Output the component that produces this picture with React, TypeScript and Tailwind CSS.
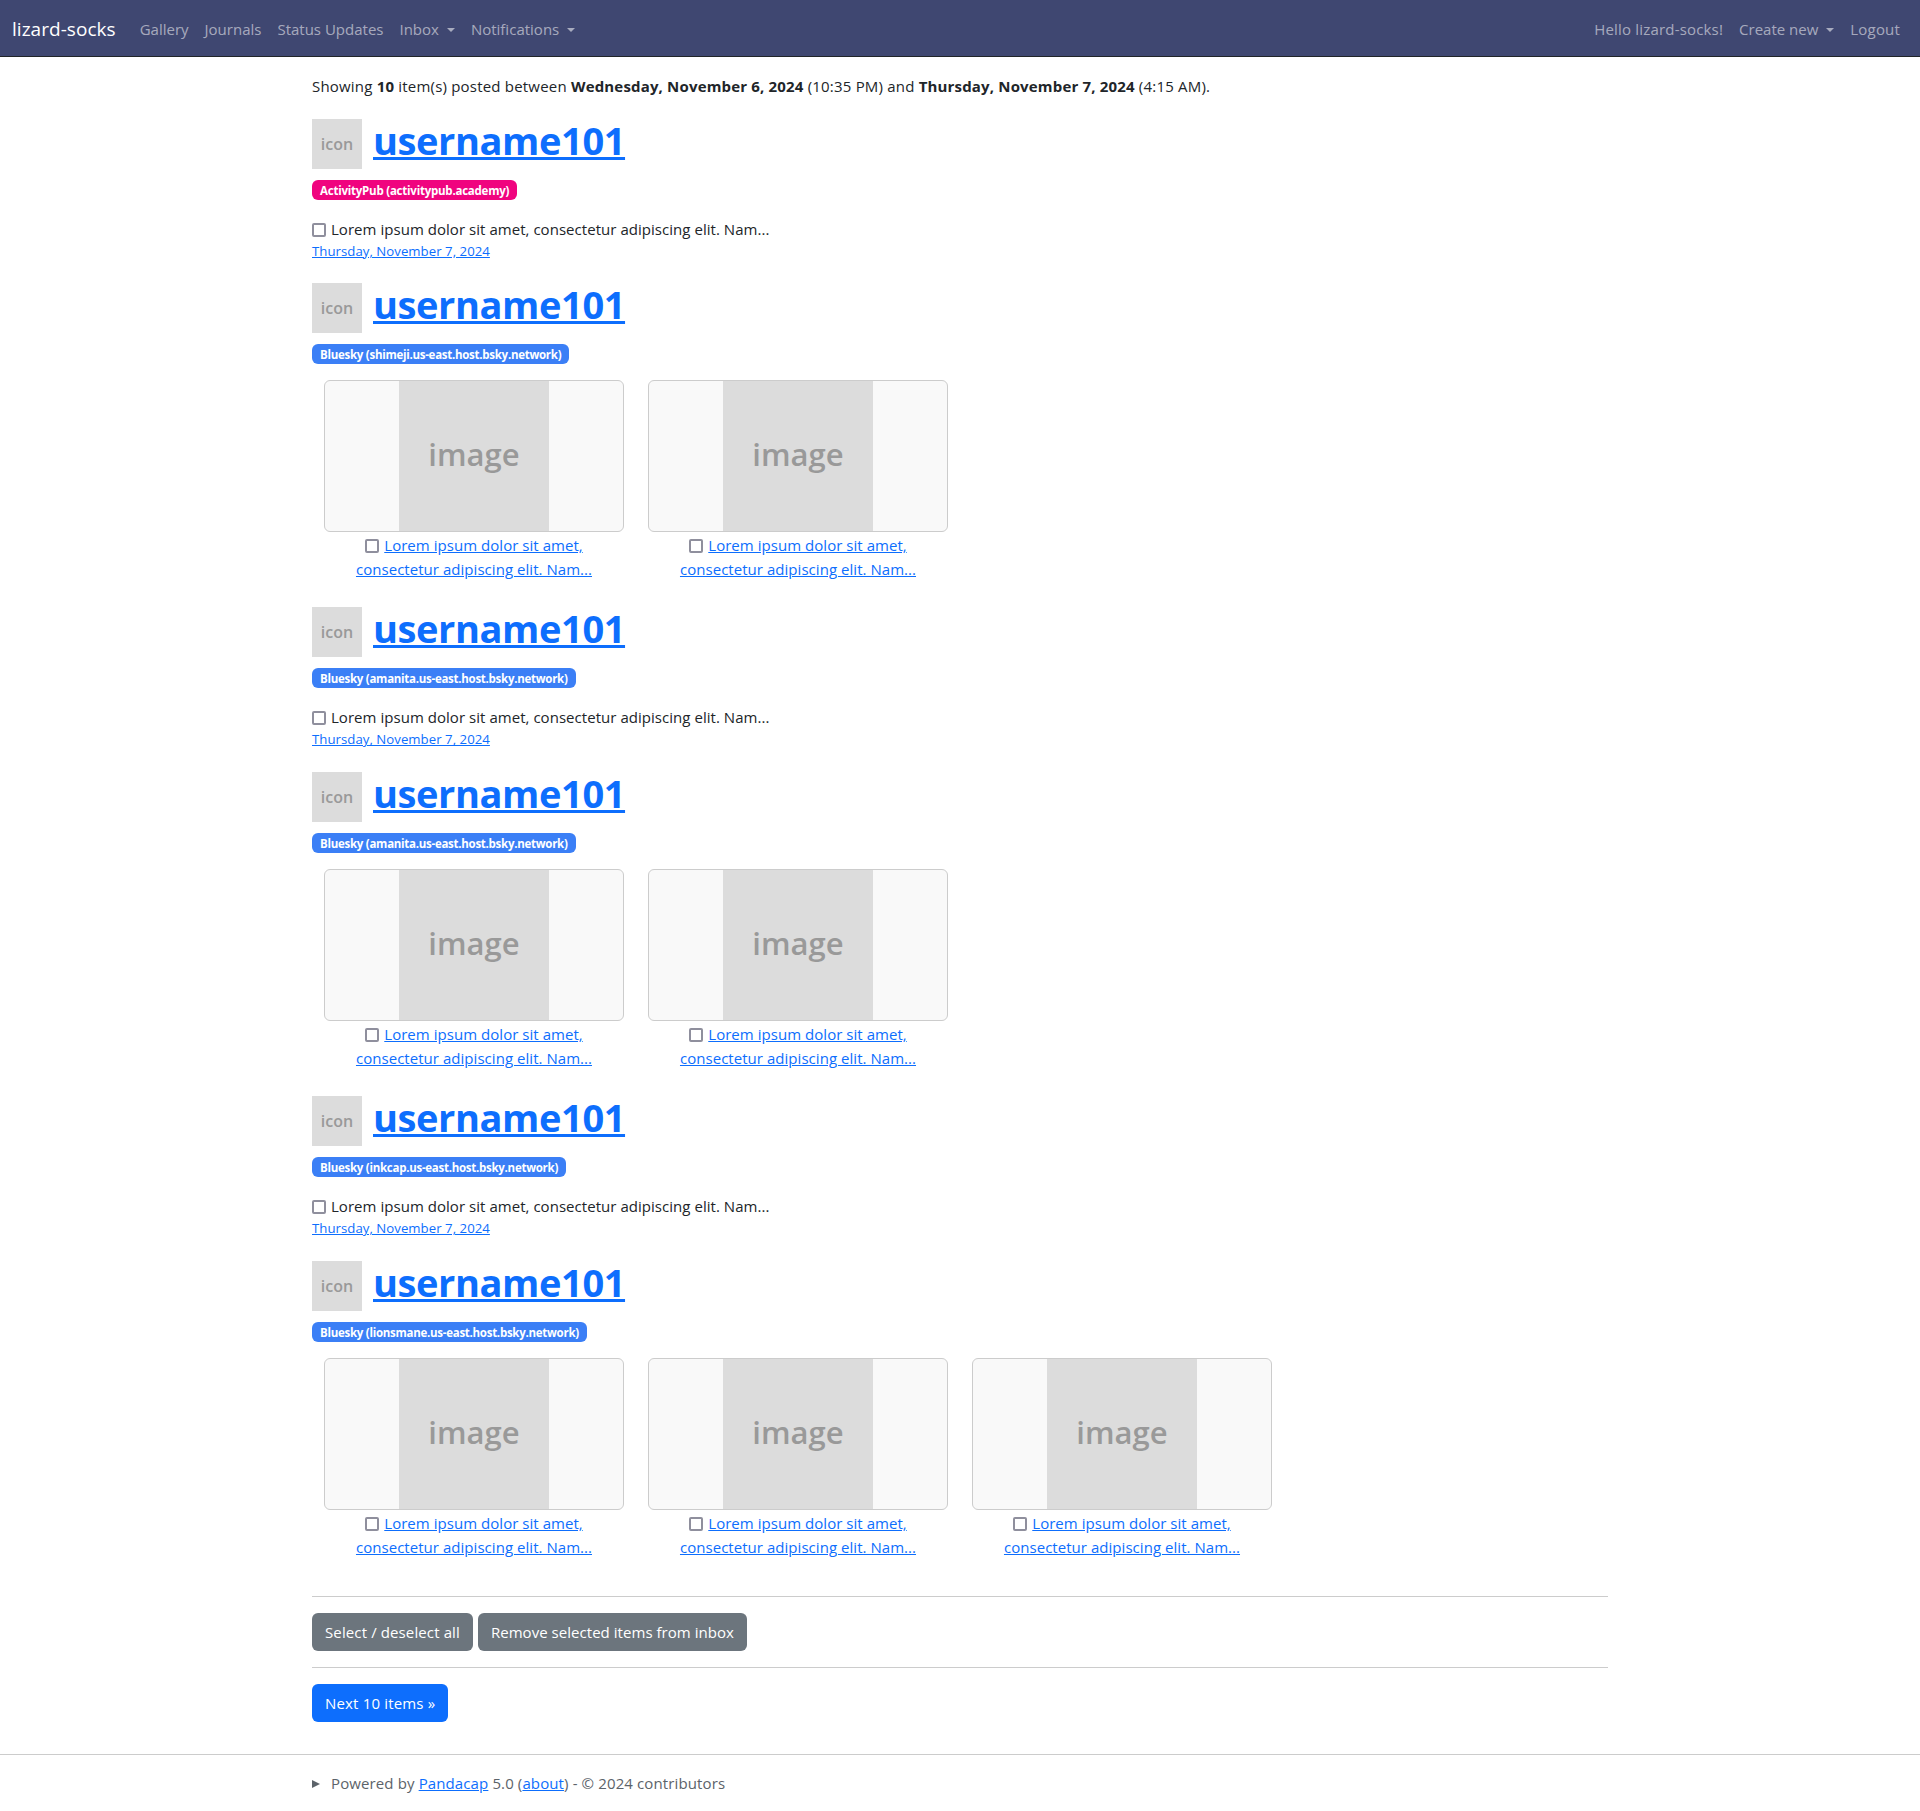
const font = { fontFamily: '"Open Sans", sans-serif' };

const Caret = () => (
    <span className="ml-2 inline-block align-[3px] border-x-[4.8px] border-t-[4.8px] border-x-transparent border-t-current" />
);

const NavLink = ({ label, caret, wide }: { label: string; caret?: boolean; wide?: boolean }) => (
    <a className={`px-2 text-[rgba(255,255,255,0.55)] whitespace-nowrap ${wide ? "tracking-[0.18px]" : "tracking-[0px]"}`}>
        {label}
        {caret && <Caret />}
    </a>
);

const Checkbox = () => (
    <input type="checkbox" className="appearance-none w-[14px] h-[14px] border-2 border-[#8f8f9d] rounded-[2px] align-[-2px] mr-[5px]" />
);

const ItemHeader = ({ badge, pink }: { badge: string; pink?: boolean }) => (
    <>
        <div className="flex items-start h-[50px]">
            <div className="w-[50px] h-[50px] bg-[#dcdcdc] text-[#999999] flex items-center justify-center text-base font-semibold">icon</div>
            <a className="ml-[11px] text-[38px] leading-[42px] font-bold text-[#0d6efd] underline tracking-[-0.4px]">username101</a>
        </div>
        <div className="mt-[11px] h-5 flex">
            <span className={`${pink ? "bg-[#f0047f] tracking-[-0.23px]" : "bg-[#3b7ff6] tracking-[-0.27px]"} text-white rounded-[6px] px-2 text-[11.5px] font-bold leading-[21px]`}>
                {badge}
            </span>
        </div>
    </>
);

const TextItem = ({ badge, pink }: { badge: string; pink?: boolean }) => (
    <div className="h-[164.6px]">
        <ItemHeader badge={badge} pink={pink} />
        <div className="mt-[17px] leading-6">
            <Checkbox />
            Lorem ipsum dolor sit amet, consectetur adipiscing elit. Nam...
        </div>
        <a className="block text-[13.2px] leading-[21px] text-[#0d6efd] underline">Thursday, November 7, 2024</a>
    </div>
);

const Figure = () => (
    <div className="w-[300px]">
        <div className="h-[152px] border border-[#cccccc] rounded-[6px] bg-[#f9f9f9] flex justify-center overflow-hidden">
            <div className="w-[150px] h-[150px] pb-1 bg-[#dcdcdc] text-[#999999] flex items-center justify-center text-[31px] font-semibold">image</div>
        </div>
        <div className="mt-px leading-6 text-center">
            <Checkbox />
            <a className="text-[#0d6efd] underline">
                Lorem ipsum dolor sit amet,
                <br />
                consectetur adipiscing elit. Nam...
            </a>
        </div>
    </div>
);

const GalleryItem = ({ badge, count }: { badge: string; count: number }) => (
    <div className="h-[324.2px]">
        <ItemHeader badge={badge} />
        <div className="mt-4 pl-3 flex gap-6">
            {Array.from({ length: count }).map((_, i) => (
                <Figure key={i} />
            ))}
        </div>
    </div>
);

export default function App() {
    return (
        <div style={font} className="bg-white text-[#212529] text-[15px] tracking-[0.04px] min-h-[1811px]">
            <nav className="h-[57px] pt-[2px] bg-[#3f4771] border-b border-[#212529] flex items-center justify-between px-3">
                <div className="flex items-center">
                    <a className="text-[19px] text-white mr-4 whitespace-nowrap">lizard-socks</a>
                    <NavLink label="Gallery" />
                    <NavLink label="Journals" />
                    <NavLink label="Status Updates" />
                    <NavLink label="Inbox" caret />
                    <NavLink label="Notifications" caret />
                </div>
                <div className="flex items-center">
                    <NavLink label="Hello lizard-socks!" wide />
                    <NavLink label="Create new" caret />
                    <NavLink label="Logout" wide />
                </div>
            </nav>

            <main className="w-[1320px] mx-auto px-3 pt-[17px]">
                <p className="leading-6 mb-[20.6px] tracking-[0.2px] [&_b]:tracking-[0.17px]">
                    Showing <b>10</b> item(s) posted between <b>Wednesday, November 6, 2024</b> (10:35 PM) and <b>Thursday, November 7, 2024</b> (4:15 AM).
                </p>

                <TextItem badge="ActivityPub (activitypub.academy)" pink />
                <GalleryItem badge="Bluesky (shimeji.us-east.host.bsky.network)" count={2} />
                <TextItem badge="Bluesky (amanita.us-east.host.bsky.network)" />
                <GalleryItem badge="Bluesky (amanita.us-east.host.bsky.network)" count={2} />
                <TextItem badge="Bluesky (inkcap.us-east.host.bsky.network)" />
                <GalleryItem badge="Bluesky (lionsmane.us-east.host.bsky.network)" count={3} />

                <hr className="mt-[11px] border-[#cccccc]" />
                <div className="my-4 flex gap-[5px]">
                    <button className="h-[38px] px-[13px] bg-[#6c757d] text-white rounded-[6px] tracking-[0.12px]">Select / deselect all</button>
                    <button className="h-[38px] px-[13px] bg-[#6c757d] text-white rounded-[6px]">Remove selected items from inbox</button>
                </div>
                <hr className="border-[#cccccc]" />
                <button className="mt-4 h-[38px] px-[13px] bg-[#0d6efd] text-white rounded-[6px] tracking-[0.17px]">Next 10 items »</button>
            </main>

            <footer className="mt-8 border-t border-[#cccccc] pt-4">
                <div className="w-[1320px] mx-auto px-3 text-[#5c636a] leading-6 tracking-[0.12px]">
                    <details>
                        <summary className="list-none">
                            <span className="inline-block align-[1px] mr-[11px] border-y-[4px] border-l-[8px] border-y-transparent border-l-[#5c636a]" />
                            Powered by <a className="text-[#0d6efd] underline">Pandacap</a> 5.0 (<a className="text-[#0d6efd] underline">about</a>) - © 2024 contributors
                        </summary>
                    </details>
                </div>
            </footer>
        </div>
    );
}
